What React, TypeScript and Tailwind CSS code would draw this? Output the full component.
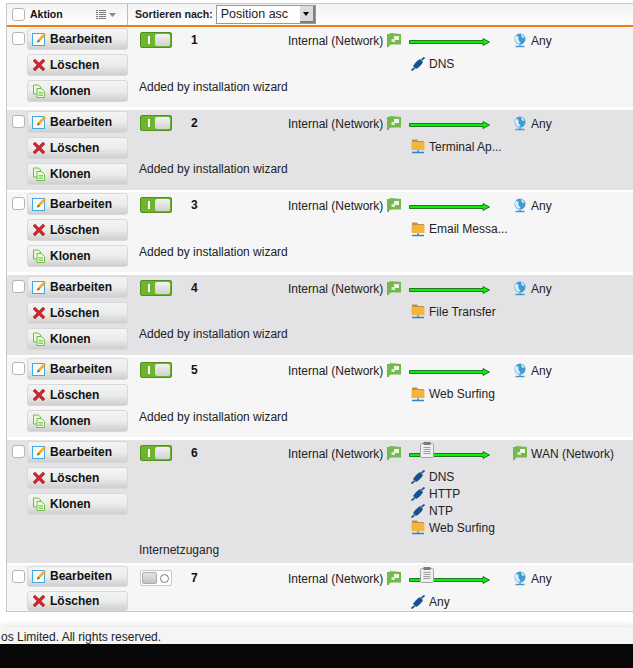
import type { ReactNode } from "react";

type Service = { kind: "plug" | "folder"; label: string };

type Rule = {
    id: number;
    on: boolean;
    log?: boolean;
    dest: "any" | "wan";
    services: Service[];
    desc: string;
    height: string;
    gray: boolean;
    noClone?: boolean;
};

const rules: Rule[] = [
    { id: 1, on: true, dest: "any", services: [{ kind: "plug", label: "DNS" }], desc: "Added by installation wizard", height: "h-[80px]", gray: false },
    { id: 2, on: true, dest: "any", services: [{ kind: "folder", label: "Terminal Ap..." }], desc: "Added by installation wizard", height: "h-[80px]", gray: true },
    { id: 3, on: true, dest: "any", services: [{ kind: "folder", label: "Email Messa..." }], desc: "Added by installation wizard", height: "h-[80px]", gray: false },
    { id: 4, on: true, dest: "any", services: [{ kind: "folder", label: "File Transfer" }], desc: "Added by installation wizard", height: "h-[80px]", gray: true },
    { id: 5, on: true, dest: "any", services: [{ kind: "folder", label: "Web Surfing" }], desc: "Added by installation wizard", height: "h-[80px]", gray: false },
    {
        id: 6,
        on: true,
        log: true,
        dest: "wan",
        services: [
            { kind: "plug", label: "DNS" },
            { kind: "plug", label: "HTTP" },
            { kind: "plug", label: "NTP" },
            { kind: "folder", label: "Web Surfing" },
        ],
        desc: "Internetzugang",
        height: "h-[123px]",
        gray: true,
    },
    // last row runs off the bottom of the scroll area
    { id: 7, on: false, log: true, dest: "any", services: [{ kind: "plug", label: "Any" }], desc: "", height: "h-[46px]", gray: false, noClone: true },
];

const EditIcon = () => (
    <svg width="14" height="14" viewBox="0 0 14 14" className="shrink-0">
        <rect x="0.500" y="1.500" width="12" height="12" fill="#f4fbff" stroke="#45a8e0" />
        <path d="M5 10.500l1-3L12 1l2 2-6.500 6.500z" fill="#f5ad22" />
        <path d="M5 10.500l1-3 2 2z" fill="#8a5a18" />
    </svg>
);

const DeleteIcon = () => (
    <svg width="14" height="14" viewBox="0 0 14 14" className="shrink-0">
        <path d="M1 3l2-2 4 4 4-4 2 2-4 4 4 4-2 2-4-4-4 4-2-2 4-4z" fill="#c9282c" stroke="#a81c20" strokeWidth="0.500" />
    </svg>
);

const CloneIcon = () => (
    <svg width="14" height="14" viewBox="0 0 14 14" className="shrink-0">
        <path d="M1.500 1h5l2 2v7h-7z" fill="#eaf7dd" stroke="#6cbf3c" />
        <path d="M5 4.500h4.500l3 3v6H5z" fill="#f4fbec" stroke="#6cbf3c" />
        <path d="M6.500 8.500h4.500M6.500 10h4.500M6.500 11.500h4.500" stroke="#6cbf3c" strokeWidth="0.800" />
    </svg>
);

const FlagIcon = () => (
    <svg width="14" height="14" viewBox="0 0 14 14" className="shrink-0">
        <path d="M0 1h2l1.500-1L14 1v10.500H4l-1.500 1H2V14H0z" fill="#74b850" />
        <rect x="7" y="3" width="5" height="4" fill="#eef7e7" />
        <rect x="4.500" y="6" width="3.500" height="3" fill="#d8edc8" />
    </svg>
);

const GlobeIcon = () => (
    <svg width="14" height="15" viewBox="0 0 14 15" className="shrink-0">
        <circle cx="7" cy="6" r="5.500" fill="#3f9ad6" />
        <path d="M3 2.500c2 .5 3 1.500 2.500 3S6 8 7.500 9.500L6 11C3.500 10.500 2 8 2 6c0-1.500.500-2.500 1-3.500zM8 1c2 .5 3 2 3.500 4L9 4.500z" fill="#d9eefa" />
        <path d="M7 11.500v1.500M2.500 13.500h9" stroke="#3f9ad6" strokeWidth="1.400" />
    </svg>
);

const PlugIcon = () => (
    <svg width="14" height="14" viewBox="0 0 14 14" className="shrink-0">
        <path d="M0.500 13.500l3-2.500M10.500 3l3-2.500" stroke="#1d5a96" strokeWidth="1.800" />
        <path d="M2 9c1.500-2.500 4-5 7-7l3 3c-1.500 3-4 5.500-7 7z" fill="#17518c" />
    </svg>
);

const FolderIcon = () => (
    <svg width="14" height="15" viewBox="0 0 14 15" className="shrink-0">
        <path d="M1 0.500h5l1 1.500h6v2H1z" fill="#bd9447" />
        <rect x="0.500" y="3" width="13" height="8" rx="0.500" fill="#f3b53f" />
        <path d="M7 11v2M1 13.500h12" stroke="#2f86c5" strokeWidth="1.300" />
    </svg>
);

const ClipboardIcon = () => (
    <svg width="14" height="16" viewBox="0 0 14 16">
        <rect x="0.500" y="1.500" width="13" height="14" rx="1" fill="#efefef" stroke="#a5a5a5" />
        <rect x="3.500" y="0" width="7" height="3" fill="#7c7c7c" />
        <path d="M3.500 5.500h7M3.500 7.500h7M3.500 9.500h7M3.500 11.500h7" stroke="#8a8a8a" strokeWidth="0.800" />
    </svg>
);

const Arrow = () => (
    <svg width="82" height="10" viewBox="0 0 82 10" className="block">
        <path d="M0.500 3.500H74V1.500l6.500 3.500L74 8.500V6.500H0.500z" fill="#0aee0a" stroke="#0a5a0a" strokeWidth="0.800" />
    </svg>
);

const ActionButton = ({ icon, label }: { icon: ReactNode; label: string }) => (
    <button className="flex h-[22px] w-[101px] items-center gap-[4px] rounded-[3px] border border-[#d8d8d8] bg-linear-to-b from-[#f4f4f4] via-[#ececec] to-[#cfcfcf] pl-[4px] text-[12px] font-bold text-[#111]">
        {icon}
        {label}
    </button>
);

const Checkbox = () => <span className="block h-[13px] w-[13px] rounded-[3px] border border-[#b5b5b5] bg-white" />;

const Toggle = ({ on }: { on: boolean }) =>
    on ? (
        <div className="flex h-[16px] w-[32px] items-center rounded-[2px] border border-[#4f8f1c] bg-[#6cb52c] pl-[7px] pr-[1px]">
            <span className="h-[8px] w-[2px] bg-white" />
            <span className="ml-auto h-[12px] w-[15px] rounded-[2px] bg-linear-to-b from-[#f2f2f2] to-[#d2d2d2]" />
        </div>
    ) : (
        <div className="flex h-[16px] w-[32px] items-center rounded-[2px] border border-[#c8c8c8] bg-white pl-[1px] pr-[2px]">
            <span className="h-[12px] w-[15px] rounded-[2px] border border-[#aaa] bg-linear-to-b from-[#e4e4e4] to-[#c4c4c4]" />
            <span className="ml-auto h-[9px] w-[9px] rounded-full border-[1.5px] border-[#777]" />
        </div>
    );

const RuleRow = ({ rule }: { rule: Rule }) => (
    <div className={`flex shrink-0 ${rule.height} ${rule.gray ? "bg-[#e3e3e5]" : "bg-[#f6f6f6]"}`}>
        <div className="flex w-[121px] shrink-0 pl-[5px] pt-[1px]">
            <div className="w-[15px] shrink-0 pt-[4px]">
                <Checkbox />
            </div>
            <div className="flex flex-col gap-[4px]">
                <ActionButton icon={<EditIcon />} label="Bearbeiten" />
                <ActionButton icon={<DeleteIcon />} label="Löschen" />
                {!rule.noClone && <ActionButton icon={<CloneIcon />} label="Klonen" />}
            </div>
        </div>
        <div className="flex min-w-0 flex-1 flex-col pl-[11px] pt-[5px]">
            <div className="flex">
                <div className="w-[52px] shrink-0 pl-[1px]">
                    <Toggle on={rule.on} />
                </div>
                <div className="w-[97px] shrink-0 pt-px text-[12px] font-bold leading-[14px] text-[#111]">{rule.id}</div>
                <div className="w-[99px] shrink-0 pt-[2px] text-[12px] leading-[14px] text-[#222]">Internal (Network)</div>
                <div className="w-[22px] shrink-0 pt-[1px]">
                    <FlagIcon />
                </div>
                <div className="relative w-[104px] shrink-0 pt-[5px]">
                    <Arrow />
                    {rule.log && (
                        <div className="absolute left-[11px] top-[-3px]">
                            <ClipboardIcon />
                        </div>
                    )}
                </div>
                <div className="flex items-start gap-[4px] pt-[1px] text-[12px] leading-[14px] text-[#222]">
                    {rule.dest === "any" ? <GlobeIcon /> : <FlagIcon />}
                    <span className="pt-px">{rule.dest === "any" ? "Any" : "WAN (Network)"}</span>
                </div>
            </div>
            <div className="mt-[9px] flex flex-col gap-[3px] pl-[272px]">
                {rule.services.map((s) => (
                    <div key={s.label} className="flex h-[14px] items-center gap-[4px] text-[12px] leading-[14px] text-[#222]">
                        {s.kind === "plug" ? <PlugIcon /> : <FolderIcon />}
                        <span>{s.label}</span>
                    </div>
                ))}
            </div>
            {rule.desc && <div className="mt-[8.500px] text-[12px] leading-[14px] text-[#222]">{rule.desc}</div>}
        </div>
    </div>
);

export default function App() {
    return (
        <div className="flex h-[668px] w-[633px] flex-col overflow-hidden bg-white font-['Liberation_Sans',Arial,sans-serif]">
            <div className="ml-[6px] mt-[3px] flex h-[609px] shrink-0 flex-col overflow-hidden border-b border-l border-t border-[#c8c8c8]">
                {/* header */}
                <div className="flex h-[23px] shrink-0 items-center border-b-[2px] border-[#e8820c] bg-linear-to-b from-[#f2f2f2] to-white">
                    <div className="flex h-full w-[121px] shrink-0 items-center border-r border-[#bdbdbd] pl-[5px]">
                        <Checkbox />
                        <span className="ml-[5px] pt-px text-[10.500px] font-bold text-[#111]">Aktion</span>
                        <svg width="20" height="9" viewBox="0 0 20 9" className="ml-[33px]">
                            <path d="M0 .5h2M3 .5h7M0 2.500h2M3 2.500h7M0 4.500h2M3 4.500h7M0 6.500h2M3 6.500h7M0 8.500h2M3 8.500h7" stroke="#777" />
                            <path d="M13 3h7l-3.500 4z" fill="#888" />
                        </svg>
                    </div>
                    <span className="ml-[7px] text-[10.600px] font-bold text-[#222]">Sortieren nach:</span>
                    <div className="ml-[3px] flex h-[19px] w-[100px] items-center border border-[#9a9a9a] bg-white pl-[4px] text-[12.500px] text-[#222]">
                        <span>Position asc</span>
                        <span className="ml-auto flex h-[17px] w-[15px] items-center justify-center border-b-2 border-r-2 border-[#7f7f7f] bg-[#dcdcdc]">
                            <span className="h-0 w-0 border-x-[3.500px] border-t-[4px] border-x-transparent border-t-black" />
                        </span>
                    </div>
                </div>
                {/* rules */}
                <div className="flex flex-col gap-[2.500px]">
                    {rules.map((rule) => (
                        <RuleRow key={rule.id} rule={rule} />
                    ))}
                </div>
            </div>
            <div className="h-[15px] shrink-0" />
            <div className="flex h-[17px] shrink-0 items-center overflow-hidden bg-[#f5f5f5] pt-[2px] shadow-[0_-3px_5px_rgba(0,0,0,0.08)]">
                <span className="whitespace-nowrap pl-px text-[12px] text-[#222]">os Limited. All rights reserved.</span>
            </div>
            <div className="flex-1 bg-[#080808]" />
        </div>
    );
}
